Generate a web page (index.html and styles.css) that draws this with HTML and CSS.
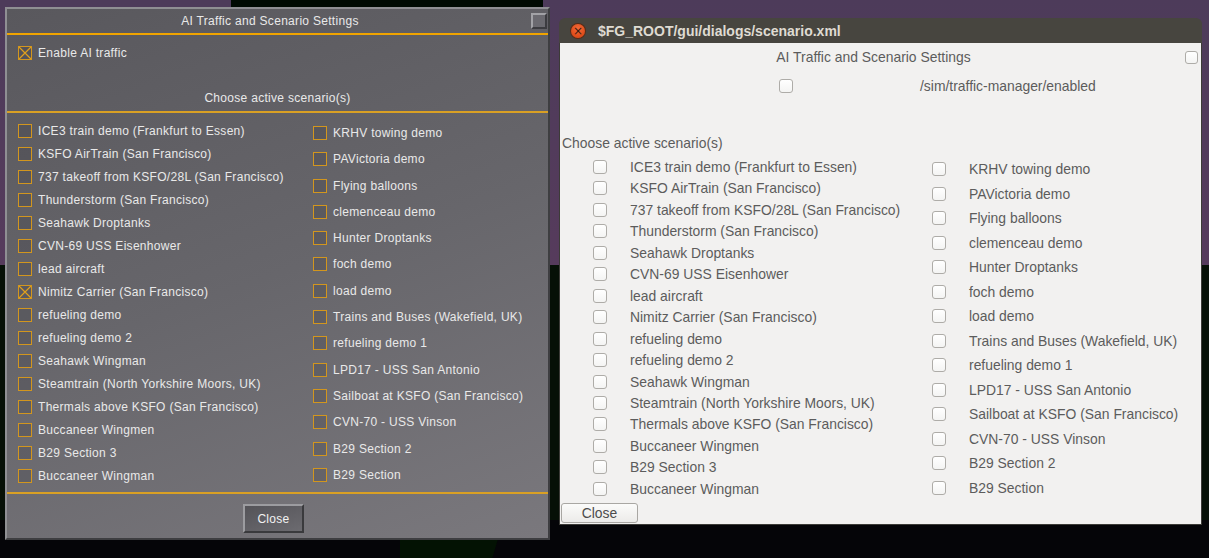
FILE: index.html
```html
<!DOCTYPE html>
<html>
<head>
<meta charset="UTF-8">
<title>AI Traffic and Scenario Settings</title>
<link rel="stylesheet" href="styles.css">
</head>
<body>
<div class="desk">
    <div class="desk-purple"></div>
    <div class="desk-black"></div>
    <div class="desk-green"></div>
    <div class="desk-strip"></div>

    <!-- old PUI dialog -->
    <div class="pui">
        <div class="pui-title">
            <span class="pui-title-text">AI Traffic and Scenario Settings</span>
            <span class="pui-close"></span>
        </div>
        <div class="pui-rule"></div>
        <div class="pui-enable">
            <span class="pui-box on"><svg width="14" height="14" viewBox="0 0 14 14"><path d="M1 1L13 13M13 1L1 13" stroke="#e0a01c" stroke-width="1.2"/></svg></span>
            <span>Enable AI traffic</span>
        </div>
        <div class="pui-head">Choose active scenario(s)</div>
        <div class="pui-rule thin"></div>
        <div class="pui-cols">
            <div class="pui-col">
                <div class="pui-row"><span class="pui-box"></span><span>ICE3 train demo (Frankfurt to Essen)</span></div>
                <div class="pui-row"><span class="pui-box"></span><span>KSFO AirTrain (San Francisco)</span></div>
                <div class="pui-row"><span class="pui-box"></span><span>737 takeoff from KSFO/28L (San Francisco)</span></div>
                <div class="pui-row"><span class="pui-box"></span><span>Thunderstorm (San Francisco)</span></div>
                <div class="pui-row"><span class="pui-box"></span><span>Seahawk Droptanks</span></div>
                <div class="pui-row"><span class="pui-box"></span><span>CVN-69 USS Eisenhower</span></div>
                <div class="pui-row"><span class="pui-box"></span><span>lead aircraft</span></div>
                <div class="pui-row"><span class="pui-box on"><svg width="14" height="14" viewBox="0 0 14 14"><path d="M1 1L13 13M13 1L1 13" stroke="#e0a01c" stroke-width="1.2"/></svg></span><span>Nimitz Carrier (San Francisco)</span></div>
                <div class="pui-row"><span class="pui-box"></span><span>refueling demo</span></div>
                <div class="pui-row"><span class="pui-box"></span><span>refueling demo 2</span></div>
                <div class="pui-row"><span class="pui-box"></span><span>Seahawk Wingman</span></div>
                <div class="pui-row"><span class="pui-box"></span><span>Steamtrain (North Yorkshire Moors, UK)</span></div>
                <div class="pui-row"><span class="pui-box"></span><span>Thermals above KSFO (San Francisco)</span></div>
                <div class="pui-row"><span class="pui-box"></span><span>Buccaneer Wingmen</span></div>
                <div class="pui-row"><span class="pui-box"></span><span>B29 Section 3</span></div>
                <div class="pui-row"><span class="pui-box"></span><span>Buccaneer Wingman</span></div>
            </div>
            <div class="pui-col right">
                <div class="pui-row"><span class="pui-box"></span><span>KRHV towing demo</span></div>
                <div class="pui-row"><span class="pui-box"></span><span>PAVictoria demo</span></div>
                <div class="pui-row"><span class="pui-box"></span><span>Flying balloons</span></div>
                <div class="pui-row"><span class="pui-box"></span><span>clemenceau demo</span></div>
                <div class="pui-row"><span class="pui-box"></span><span>Hunter Droptanks</span></div>
                <div class="pui-row"><span class="pui-box"></span><span>foch demo</span></div>
                <div class="pui-row"><span class="pui-box"></span><span>load demo</span></div>
                <div class="pui-row"><span class="pui-box"></span><span>Trains and Buses (Wakefield, UK)</span></div>
                <div class="pui-row"><span class="pui-box"></span><span>refueling demo 1</span></div>
                <div class="pui-row"><span class="pui-box"></span><span>LPD17 - USS San Antonio</span></div>
                <div class="pui-row"><span class="pui-box"></span><span>Sailboat at KSFO (San Francisco)</span></div>
                <div class="pui-row"><span class="pui-box"></span><span>CVN-70 - USS Vinson</span></div>
                <div class="pui-row"><span class="pui-box"></span><span>B29 Section 2</span></div>
                <div class="pui-row"><span class="pui-box"></span><span>B29 Section</span></div>
            </div>
        </div>
        <div class="pui-rule thin"></div>
        <div class="pui-foot">
            <button class="pui-btn">Close</button>
        </div>
    </div>

    <!-- Qt dialog -->
    <div class="qt">
        <div class="qt-bar">
            <span class="qt-x">&#215;</span>
            <span class="qt-bar-text">$FG_ROOT/gui/dialogs/scenario.xml</span>
        </div>
        <div class="qt-body">
            <div class="qt-top">
                <span class="qt-top-text">AI Traffic and Scenario Settings</span>
                <span class="qt-box small"></span>
            </div>
            <div class="qt-enable">
                <span class="qt-box"></span>
                <span class="qt-prop">/sim/traffic-manager/enabled</span>
            </div>
            <div class="qt-head">Choose active scenario(s)</div>
            <div class="qt-cols">
                <div class="qt-col">
                    <div class="qt-row"><span class="qt-box"></span><span>ICE3 train demo (Frankfurt to Essen)</span></div>
                    <div class="qt-row"><span class="qt-box"></span><span>KSFO AirTrain (San Francisco)</span></div>
                    <div class="qt-row"><span class="qt-box"></span><span>737 takeoff from KSFO/28L (San Francisco)</span></div>
                    <div class="qt-row"><span class="qt-box"></span><span>Thunderstorm (San Francisco)</span></div>
                    <div class="qt-row"><span class="qt-box"></span><span>Seahawk Droptanks</span></div>
                    <div class="qt-row"><span class="qt-box"></span><span>CVN-69 USS Eisenhower</span></div>
                    <div class="qt-row"><span class="qt-box"></span><span>lead aircraft</span></div>
                    <div class="qt-row"><span class="qt-box"></span><span>Nimitz Carrier (San Francisco)</span></div>
                    <div class="qt-row"><span class="qt-box"></span><span>refueling demo</span></div>
                    <div class="qt-row"><span class="qt-box"></span><span>refueling demo 2</span></div>
                    <div class="qt-row"><span class="qt-box"></span><span>Seahawk Wingman</span></div>
                    <div class="qt-row"><span class="qt-box"></span><span>Steamtrain (North Yorkshire Moors, UK)</span></div>
                    <div class="qt-row"><span class="qt-box"></span><span>Thermals above KSFO (San Francisco)</span></div>
                    <div class="qt-row"><span class="qt-box"></span><span>Buccaneer Wingmen</span></div>
                    <div class="qt-row"><span class="qt-box"></span><span>B29 Section 3</span></div>
                    <div class="qt-row"><span class="qt-box"></span><span>Buccaneer Wingman</span></div>
                </div>
                <div class="qt-col right">
                    <div class="qt-row"><span class="qt-box"></span><span>KRHV towing demo</span></div>
                    <div class="qt-row"><span class="qt-box"></span><span>PAVictoria demo</span></div>
                    <div class="qt-row"><span class="qt-box"></span><span>Flying balloons</span></div>
                    <div class="qt-row"><span class="qt-box"></span><span>clemenceau demo</span></div>
                    <div class="qt-row"><span class="qt-box"></span><span>Hunter Droptanks</span></div>
                    <div class="qt-row"><span class="qt-box"></span><span>foch demo</span></div>
                    <div class="qt-row"><span class="qt-box"></span><span>load demo</span></div>
                    <div class="qt-row"><span class="qt-box"></span><span>Trains and Buses (Wakefield, UK)</span></div>
                    <div class="qt-row"><span class="qt-box"></span><span>refueling demo 1</span></div>
                    <div class="qt-row"><span class="qt-box"></span><span>LPD17 - USS San Antonio</span></div>
                    <div class="qt-row"><span class="qt-box"></span><span>Sailboat at KSFO (San Francisco)</span></div>
                    <div class="qt-row"><span class="qt-box"></span><span>CVN-70 - USS Vinson</span></div>
                    <div class="qt-row"><span class="qt-box"></span><span>B29 Section 2</span></div>
                    <div class="qt-row"><span class="qt-box"></span><span>B29 Section</span></div>
                </div>
            </div>
            <button class="qt-btn">Close</button>
        </div>
    </div>
</div>
</body>
</html>
```

FILE: styles.css
```css
body {
    margin: 0;
    background: #050508;
    overflow: hidden;
}
.desk {
    position: relative;
    width: 1209px;
    height: 558px;
    overflow: hidden;
}
.desk-purple {
    position: absolute;
    left: 0;
    top: 0;
    width: 1209px;
    height: 265px;
    background: linear-gradient(180deg, #4d3b5a 0%, #563b5c 100%);
}
.desk-black {
    position: absolute;
    left: 231px;
    top: 0;
    width: 312px;
    height: 30px;
    background: #000a02;
}
.desk-green {
    position: absolute;
    left: 400px;
    top: 515px;
    width: 105px;
    height: 43px;
    background: #031203;
    clip-path: polygon(0 0, 100% 0, 88% 100%, 0 100%);
}
.desk-strip {
    position: absolute;
    left: 0;
    top: 265px;
    width: 1209px;
    height: 255px;
    background: #061006;
}

/* ---- PUI dialog ---- */
.pui {
    position: absolute;
    left: 5px;
    top: 7px;
    width: 545px;
    height: 533px;
    box-sizing: border-box;
    border: 2px solid;
    border-color: #8f8f93 #3e3e41 #3e3e41 #8f8f93;
    background: linear-gradient(160deg, #59585d 0%, #67666b 50%, #7a787d 100%);
    font-family: "Liberation Sans", Arial, sans-serif;
    font-size: 12px;
    letter-spacing: 0.3px;
    color: #e9e9e9;
    display: flex;
    flex-direction: column;
}
.pui-title {
    height: 24px;
    display: flex;
    align-items: center;
}
.pui-title-text {
    flex: 1;
    text-align: center;
    padding-left: 2px;
}
.pui-close {
    width: 16px;
    height: 16px;
    box-sizing: border-box;
    margin-right: 1px;
    border: 2px solid;
    border-color: #a2a2a6 #3c3c40 #3c3c40 #a2a2a6;
    background: #6b6a70;
}
.pui-rule {
    height: 2px;
    background: #f0a400;
}
.pui-rule.thin {
    height: 2px;
    background: #d9a024;
}
.pui-enable {
    display: flex;
    align-items: center;
    gap: 6px;
    margin-top: 11px;
    padding-left: 11px;
    height: 14px;
}
.pui-head {
    margin-top: 31px;
    height: 14px;
    line-height: 14px;
    text-align: center;
    margin-bottom: 6px;
}
.pui-box {
    width: 14px;
    height: 14px;
    box-sizing: border-box;
    border: 1px solid #d2961e;
    background: rgba(60, 60, 66, 0.25);
    flex: none;
    position: relative;
}
.pui-box svg {
    position: absolute;
    left: -1px;
    top: -1px;
}
.pui-cols {
    flex: 1;
    display: grid;
    grid-template-columns: 295px 1fr;
    padding-left: 11px;
}
.pui-col {
    display: flex;
    flex-direction: column;
    justify-content: space-between;
    padding: 11px 0 9px;
}
.pui-col.right {
    padding: 13px 0 10px;
}
.pui-row {
    display: flex;
    align-items: center;
    gap: 6px;
    height: 14px;
    white-space: nowrap;
}
.pui-foot {
    height: 44px;
    display: flex;
    align-items: flex-start;
    justify-content: center;
}
.pui-btn {
    margin-top: 10px;
    margin-right: 8px;
    width: 61px;
    height: 29px;
    border: 2px solid;
    border-color: #9c9ca0 #3a3a3d #3a3a3d #9c9ca0;
    background: linear-gradient(160deg, #545358 0%, #6c6b70 100%);
    color: #f2f2f2;
    font-family: "Liberation Sans", Arial, sans-serif;
    font-size: 12px;
    letter-spacing: 0.3px;
    padding: 0;
}

/* ---- Qt dialog ---- */
.qt {
    position: absolute;
    left: 559px;
    top: 18px;
    width: 643px;
    height: 507px;
    display: flex;
    flex-direction: column;
    font-family: "Liberation Sans", Arial, sans-serif;
    font-size: 13.9px;
    color: #5c5c5c;
}
.qt-bar {
    height: 25px;
    background: #47453f;
    border-radius: 6px 6px 0 0;
    display: flex;
    align-items: center;
    flex: none;
}
.qt-x {
    width: 14px;
    height: 14px;
    margin-left: 12px;
    border-radius: 50%;
    background: radial-gradient(circle at 50% 35%, #f26b3a 0%, #df4a17 70%);
    box-shadow: 0 0 0 1px #5a2a14;
    color: #3a1a10;
    font-size: 12px;
    line-height: 14px;
    text-align: center;
    font-family: "DejaVu Sans", sans-serif;
}
.qt-bar-text {
    margin-left: 13px;
    font-weight: bold;
    font-size: 14px;
    color: #dfdbd2;
}
.qt-body {
    flex: 1;
    background: #f2f1f0;
    border: 1px solid #3c3b37;
    border-top: none;
    display: flex;
    flex-direction: column;
}
.qt-top {
    margin-top: 6px;
    height: 16px;
    display: flex;
    align-items: center;
}
.qt-top-text {
    flex: 1;
    text-align: center;
    padding-left: 2px;
}
.qt-box {
    width: 14px;
    height: 14px;
    box-sizing: border-box;
    border: 1px solid #aeaca8;
    border-radius: 3px;
    background: linear-gradient(180deg, #ffffff 0%, #f4f4f3 100%);
    flex: none;
}
.qt-box.small {
    width: 13px;
    height: 13px;
    margin-right: 3px;
}
.qt-enable {
    margin-top: 13px;
    height: 16px;
    display: flex;
    align-items: center;
    padding-left: 219px;
}
.qt-prop {
    margin-left: 127px;
}
.qt-head {
    margin-top: 41px;
    height: 16px;
    line-height: 16px;
    padding-left: 2px;
}
.qt-cols {
    height: 345px;
    display: grid;
    grid-template-columns: 339px 1fr;
    padding-left: 33px;
}
.qt-col {
    display: flex;
    flex-direction: column;
    justify-content: space-between;
    padding: 9px 0 0;
}
.qt-col.right {
    padding: 11px 0 1px;
}
.qt-row {
    display: flex;
    align-items: center;
    height: 14px;
    white-space: nowrap;
}
.qt-row span + span {
    margin-left: 23px;
}
.qt-btn {
    margin-top: 7px;
    margin-left: 1px;
    width: 77px;
    height: 20px;
    border: 1px solid #a9a7a3;
    border-radius: 3px;
    background: linear-gradient(180deg, #fbfbfa 0%, #ecebe9 100%);
    color: #4c4c4c;
    font-family: "Liberation Sans", Arial, sans-serif;
    font-size: 13.9px;
    padding: 0;
}
```
